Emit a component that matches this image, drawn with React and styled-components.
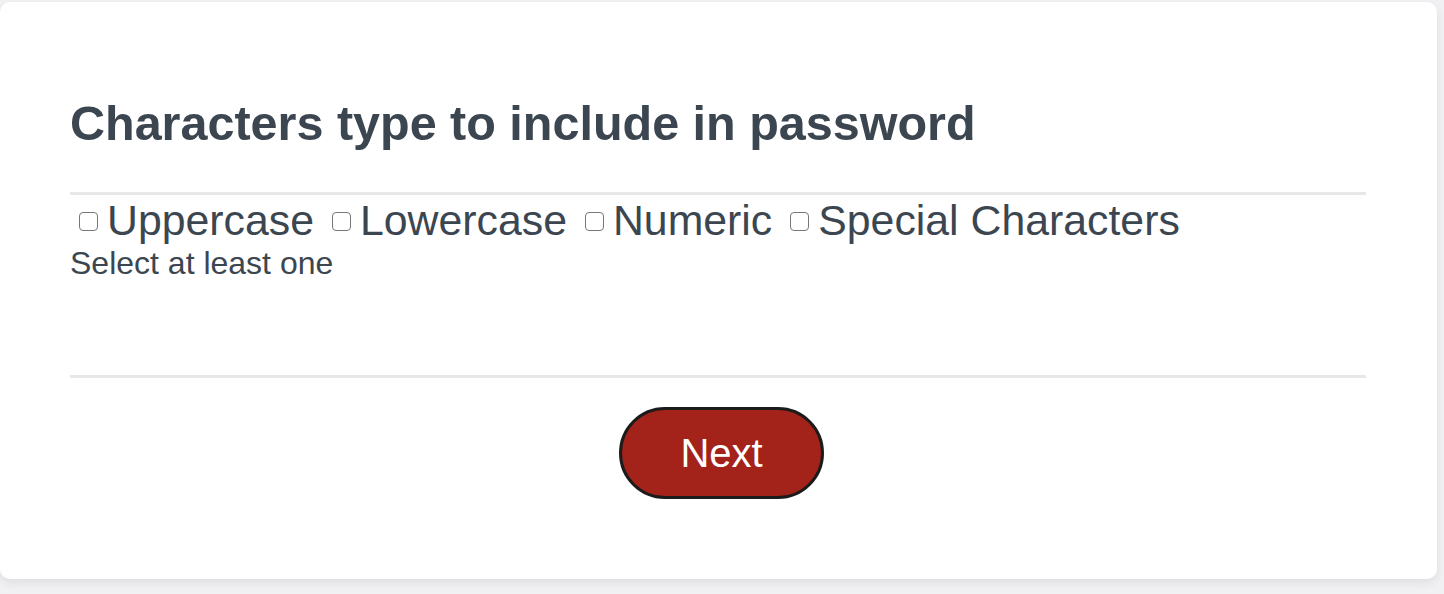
import React from "react";
import styled, { createGlobalStyle } from "styled-components";

const Global = createGlobalStyle`
  html, body { margin: 0; padding: 0; }
  body {
    background: #f1f1f3;
    font-family: "Liberation Sans", Arial, Helvetica, sans-serif;
  }
`;

const Page = styled.div`
  padding: 2px 7px 15px 0;
`;

const Card = styled.div`
  background: #ffffff;
  border-radius: 10px;
  box-shadow: 0 4px 10px rgba(0, 0, 0, 0.08);
  height: 577px;
  box-sizing: border-box;
  padding: 93px 71px 0 70px;
  color: #3c4650;
`;

const Heading = styled.h2`
  margin: 0 0 41px;
  font-size: 48.5px;
  line-height: 56px;
  font-weight: 700;
  color: #3c4650;
`;

const Divider = styled.hr`
  margin: 0;
  border: 0;
  height: 3px;
  background: #e6e7e9;
`;

const Section = styled.div`
  height: 180px;
`;

const Options = styled.div`
  display: flex;
  align-items: center;
  flex-wrap: wrap;
  height: 50px;
`;

const Option = styled.label`
  display: inline-flex;
  align-items: center;
  font-size: 42.8px;
  line-height: 50px;
  margin-right: 9px;
  color: #3c4650;
`;

const Box = styled.input.attrs({ type: "checkbox" })`
  appearance: none;
  width: 19px;
  height: 19px;
  margin: 2px 9px 0 9px;
  border: 1.5px solid #777;
  border-radius: 4px;
  box-sizing: border-box;
  background: #fff;
`;

const Hint = styled.div`
  font-size: 32px;
  line-height: 36px;
  color: #3c4650;
`;

const Footer = styled.div`
  display: flex;
  justify-content: center;
  padding: 29px 0 0 7px;
`;

const Button = styled.button`
  width: 205px;
  height: 92px;
  border-radius: 46px;
  border: 3px solid #1b1b1b;
  background: #a3221a;
  color: #ffffff;
  font-family: "Liberation Sans", Arial, sans-serif;
  font-size: 40px;
  padding: 0;
  cursor: pointer;
`;

const options = ["Uppercase", "Lowercase", "Numeric", "Special Characters"];

export default function App() {
  return (
    <>
      <Global />
      <Page>
        <Card>
          <Heading>Characters type to include in password</Heading>
          <Divider />
          <Section>
            <Options>
              {options.map((o) => (
                <Option key={o}>
                  <Box />
                  {o}
                </Option>
              ))}
            </Options>
            <Hint>Select at least one</Hint>
          </Section>
          <Divider />
          <Footer>
            <Button>Next</Button>
          </Footer>
        </Card>
      </Page>
    </>
  );
}
